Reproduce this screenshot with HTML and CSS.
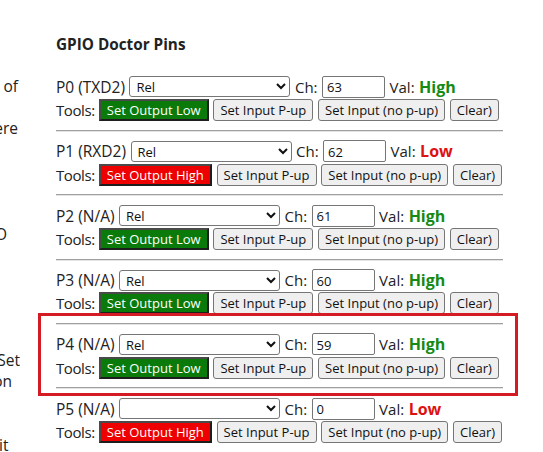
FILE: index.html
```html
<!DOCTYPE html>
<html lang="en">
<head>
<meta charset="utf-8">
<title>GPIO Doctor Pins</title>
<link rel="stylesheet" href="styles.css">
</head>
<body>
<div class="page">
  <aside class="side">
    <div class="side-line pad-2">a list of</div>
    <div class="side-line"></div>
    <div class="side-line pad-2">where</div>
    <div class="side-line"></div>
    <div class="side-line"></div>
    <div class="side-line"></div>
    <div class="side-line"></div>
    <div class="side-line pad-13">GPIO</div>
    <div class="side-line"></div>
    <div class="side-line"></div>
    <div class="side-line"></div>
    <div class="side-line"></div>
    <div class="side-line"></div>
    <div class="side-line pad-0">Set</div>
    <div class="side-line pad-8">on</div>
    <div class="side-line"></div>
    <div class="side-line"></div>
    <div class="side-line pad-11">it</div>
  </aside>

  <main class="main">
    <h3 class="title">GPIO Doctor Pins</h3>

    <div class="pin">
      <div class="pin-line">
        <span class="lbl pin-name">P0 (TXD2)</span>
        <select class="mode"><option>Rel</option></select>
        <span class="lbl">Ch:</span>
        <input class="ch" type="text" value="63">
        <span class="lbl">Val:</span>
        <b class="val high">High</b>
      </div>
      <div class="pin-line tools">
        <span class="lbl tools-lbl">Tools:</span>
        <button class="btn btn-low">Set Output Low</button>
        <button class="btn">Set Input P-up</button>
        <button class="btn">Set Input (no p-up)</button>
        <button class="btn">Clear)</button>
      </div>
      <hr class="sep">
    </div>

    <div class="pin">
      <div class="pin-line">
        <span class="lbl pin-name">P1 (RXD2)</span>
        <select class="mode"><option>Rel</option></select>
        <span class="lbl">Ch:</span>
        <input class="ch" type="text" value="62">
        <span class="lbl">Val:</span>
        <b class="val low">Low</b>
      </div>
      <div class="pin-line tools">
        <span class="lbl tools-lbl">Tools:</span>
        <button class="btn btn-high">Set Output High</button>
        <button class="btn">Set Input P-up</button>
        <button class="btn">Set Input (no p-up)</button>
        <button class="btn">Clear)</button>
      </div>
      <hr class="sep">
    </div>

    <div class="pin">
      <div class="pin-line">
        <span class="lbl pin-name">P2 (N/A)</span>
        <select class="mode"><option>Rel</option></select>
        <span class="lbl">Ch:</span>
        <input class="ch" type="text" value="61">
        <span class="lbl">Val:</span>
        <b class="val high">High</b>
      </div>
      <div class="pin-line tools">
        <span class="lbl tools-lbl">Tools:</span>
        <button class="btn btn-low">Set Output Low</button>
        <button class="btn">Set Input P-up</button>
        <button class="btn">Set Input (no p-up)</button>
        <button class="btn">Clear)</button>
      </div>
      <hr class="sep">
    </div>

    <div class="pin">
      <div class="pin-line">
        <span class="lbl pin-name">P3 (N/A)</span>
        <select class="mode"><option>Rel</option></select>
        <span class="lbl">Ch:</span>
        <input class="ch" type="text" value="60">
        <span class="lbl">Val:</span>
        <b class="val high">High</b>
      </div>
      <div class="pin-line tools">
        <span class="lbl tools-lbl">Tools:</span>
        <button class="btn btn-low">Set Output Low</button>
        <button class="btn">Set Input P-up</button>
        <button class="btn">Set Input (no p-up)</button>
        <button class="btn">Clear)</button>
      </div>
      <hr class="sep">
    </div>

    <div class="pin">
      <div class="pin-line">
        <span class="lbl pin-name">P4 (N/A)</span>
        <select class="mode"><option>Rel</option></select>
        <span class="lbl">Ch:</span>
        <input class="ch" type="text" value="59">
        <span class="lbl">Val:</span>
        <b class="val high">High</b>
      </div>
      <div class="pin-line tools">
        <span class="lbl tools-lbl">Tools:</span>
        <button class="btn btn-low">Set Output Low</button>
        <button class="btn">Set Input P-up</button>
        <button class="btn">Set Input (no p-up)</button>
        <button class="btn">Clear)</button>
      </div>
      <hr class="sep">
    </div>

    <div class="pin">
      <div class="pin-line">
        <span class="lbl pin-name">P5 (N/A)</span>
        <select class="mode"><option></option></select>
        <span class="lbl">Ch:</span>
        <input class="ch" type="text" value="0">
        <span class="lbl">Val:</span>
        <b class="val low">Low</b>
      </div>
      <div class="pin-line tools">
        <span class="lbl tools-lbl">Tools:</span>
        <button class="btn btn-high">Set Output High</button>
        <button class="btn">Set Input P-up</button>
        <button class="btn">Set Input (no p-up)</button>
        <button class="btn">Clear)</button>
      </div>
      <hr class="sep">
    </div>
  </main>

  <div class="highlight"></div>
</div>
</body>
</html>
```

FILE: styles.css
```css
html, body {
  margin: 0;
  padding: 0;
  background: #ffffff;
}

body {
  font-family: "Open Sans", "Noto Sans", sans-serif;
  font-size: 16px;
  color: #222222;
  overflow: hidden;
}

.page {
  position: relative;
  display: flex;
  align-items: flex-start;
  width: 543px;
  height: 452px;
  overflow: hidden;
}

/* left column, scrolled partly out of view */
.side {
  width: 20px;
  flex: none;
  overflow: hidden;
  padding-top: 76px;
  font-size: 15.5px;
  line-height: 21.1px;
}

.side-line {
  display: flex;
  justify-content: flex-end;
  white-space: nowrap;
  height: 21.1px;
}

.pad-0 { padding-right: 0; }
.pad-2 { padding-right: 2px; }
.pad-8 { padding-right: 8px; }
.pad-11 { padding-right: 11.5px; }
.pad-13 { padding-right: 13px; }

/* main column */
.main {
  margin-left: 36px;
  width: 447px;
  flex: none;
  padding-top: 34px;
}

.title {
  margin: 0 0 21.4px 0;
  font-size: 15.3px;
  line-height: 20px;
  font-weight: 700;
  color: #222222;
}

.pin-line {
  display: flex;
  align-items: center;
  gap: 4.5px;
  height: 23.2px;
  white-space: nowrap;
}

.pin-line.tools {
  gap: 4.8px;
}

.lbl {
  font-size: 15px;
  line-height: 20px;
}

.pin-name {
  font-size: 15.5px;
}

.tools-lbl {
  letter-spacing: -0.4px;
  margin-right: -0.8px;
}

.mode {
  width: 161px;
  height: 21px;
  box-sizing: border-box;
  font-family: "Open Sans", "Noto Sans", sans-serif;
  font-size: 13px;
  color: #111111;
  border: 1px solid #767676;
  border-radius: 3px;
  background: #ffffff;
  padding: 0 2px;
}

.ch {
  width: 63px;
  height: 22px;
  box-sizing: border-box;
  font-family: "Open Sans", "Noto Sans", sans-serif;
  font-size: 13px;
  color: #111111;
  border: 1px solid #767676;
  border-radius: 2px;
  padding: 1px 4px 0 4px;
  margin: 0;
}

.val {
  font-size: 16px;
  font-weight: 700;
  line-height: 20px;
}

.val.high { color: #158a15; }
.val.low { color: #dd1111; }

.btn {
  height: 22px;
  box-sizing: border-box;
  margin: 0;
  padding: 0 6px;
  font-family: "Open Sans", "Noto Sans", sans-serif;
  font-size: 13px;
  color: #111111;
  background: #efefef;
  border: 1px solid #767676;
  border-radius: 3px;
}

.btn-low,
.btn-high {
  color: #ffffff;
  border: 2px solid;
  border-color: #4a4a4a #1e1e1e #1e1e1e #4a4a4a;
  border-radius: 0;
}

.btn-low { background: #0a7a0a; }
.btn-high { background: #ee0000; }

.sep {
  margin: 8px 0;
  height: 0;
  border: 0;
  border-top: 1px solid #a0a0a0;
  border-bottom: 1px solid #e4e4e4;
}

/* annotation outline drawn over the P4 row */
.highlight {
  position: absolute;
  left: 38px;
  top: 313px;
  width: 480px;
  height: 83px;
  box-sizing: border-box;
  border: 3px solid #d41a22;
  pointer-events: none;
}
```
